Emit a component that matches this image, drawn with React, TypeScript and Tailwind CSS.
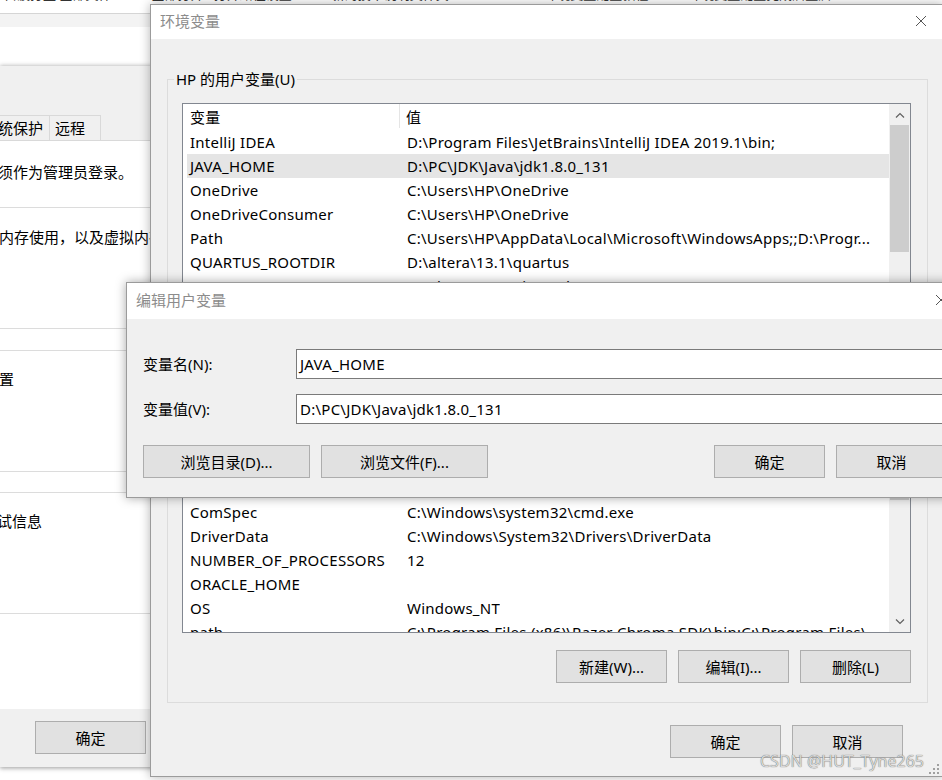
import React from "react";

type Row = [string, string];

const userRows: Row[] = [
  ["IntelliJ IDEA", "D:\\Program Files\\JetBrains\\IntelliJ IDEA 2019.1\\bin;"],
  ["JAVA_HOME", "D:\\PC\\JDK\\Java\\jdk1.8.0_131"],
  ["OneDrive", "C:\\Users\\HP\\OneDrive"],
  ["OneDriveConsumer", "C:\\Users\\HP\\OneDrive"],
  ["Path", "C:\\Users\\HP\\AppData\\Local\\Microsoft\\WindowsApps;;D:\\Progr..."],
  ["QUARTUS_ROOTDIR", "D:\\altera\\13.1\\quartus"],
  ["SOPC_KIT_NIOS2", "D:\\altera\\13.1\\nios2eds"],
];

const systemRows: Row[] = [
  ["ComputerName", "LAPTOP-JP9QG_2K"],
  ["ComSpec", "C:\\Windows\\system32\\cmd.exe"],
  ["DriverData", "C:\\Windows\\System32\\Drivers\\DriverData"],
  ["NUMBER_OF_PROCESSORS", "12"],
  ["ORACLE_HOME", ""],
  ["OS", "Windows_NT"],
  ["path", "C:\\Program Files (x86)\\Razer Chroma SDK\\bin;C:\\Program Files\\..."],
];

function Btn({ children, className = "" }: { children: React.ReactNode; className?: string }) {
  return (
    <div
      className={`flex h-[33px] items-center justify-center border border-[#adadad] bg-[#e1e1e1] text-[15px] leading-[20px] text-black ${className}`}
    >
      {children}
    </div>
  );
}

function Chevron({ up }: { up?: boolean }) {
  return (
    <svg width="10" height="6" viewBox="0 0 10 6">
      <polyline
        points={up ? "1,5.5 5,1.5 9,5.5" : "1,0.5 5,4.5 9,0.5"}
        fill="none"
        stroke="#606060"
        strokeWidth="1.2"
      />
    </svg>
  );
}

function VarList({
  rows,
  selected,
  listH,
  thumbH,
}: {
  rows: Row[];
  selected?: number;
  listH: string;
  thumbH: string;
}) {
  return (
    <div className={`ml-[14px] flex w-[729px] border border-[#828790] bg-white ${listH}`}>
      <div className="min-w-0 flex-1 overflow-hidden pl-[4px] tracking-[0.25px]">
        <div className="flex h-[26px] items-start">
          <div className="flex h-[24px] w-[213px] items-center border-r border-[#e5e5e5] pl-[3px] pt-[2px]">变量</div>
          <div className="flex h-[24px] items-center pl-[6px] pt-[2px]">值</div>
        </div>
        {rows.map((r, i) => (
          <div key={r[0]} className={`flex h-[24px] items-center ${i === selected ? "bg-[#e5e5e5]" : ""}`}>
            <div className="w-[220px] shrink-0 overflow-hidden whitespace-nowrap pl-[3px]">{r[0]}</div>
            <div className="overflow-hidden whitespace-nowrap">{r[1]}</div>
          </div>
        ))}
      </div>
      <div className="flex w-[21px] shrink-0 flex-col bg-[#f0f0f0]">
        <div className="flex h-[21px] items-center justify-center">
          <Chevron up />
        </div>
        <div className={`mx-[1px] bg-[#cdcdcd] ${thumbH}`} />
        <div className="flex-1" />
        <div className="flex h-[21px] items-center justify-center">
          <Chevron />
        </div>
      </div>
    </div>
  );
}

export default function App() {
  return (
    <div className="relative h-[780px] w-[942px] overflow-hidden bg-white font-['Noto_Sans','Noto_Sans_CJK_SC',sans-serif] text-[15px] leading-[20px] text-black">
      {/* background: browser strip + system properties window */}
      <div className="h-[14px] overflow-hidden border-b border-[#d5d5d5] bg-white">
        <div className="-mt-[16px] flex gap-[40px] whitespace-nowrap pl-[4px] text-[13px] text-[#333]">
          <span>自波打盘 全部文件</span>
          <span>全部打开 · 打开路径设置</span>
          <span>新的技术说明文件夹</span>
          <span>Windows环境变量配置教程</span>
          <span>环境变量配置完成后重启</span>
        </div>
      </div>
      <div className="h-[13px] bg-[#f3f3f3]" />
      <div className="h-[39px] bg-white" />
      <div className="w-[420px] bg-[#f0f0f0] shadow-[0_-1px_4px_rgba(0,0,0,0.2),0_2px_4px_rgba(0,0,0,0.25)]">
        <div className="h-[49px]" />
        <div className="flex h-[25px]">
          <div className="flex w-[50px] items-center justify-end overflow-hidden border-r border-t border-[#d9d9d9] pr-[6px]">
            <span className="whitespace-nowrap">系统保护</span>
          </div>
          <div className="flex w-[51px] items-center border-r border-t border-[#d9d9d9] pl-[5px]">远程</div>
        </div>
        <div className="border-t border-[#d9d9d9] bg-white">
          <div className="h-[66px] overflow-hidden whitespace-nowrap pt-[21px]">
            <span className="-ml-[17px]">必须作为管理员登录。</span>
          </div>
          <div className="h-[121px] overflow-hidden whitespace-nowrap border-t border-[#dcdcdc] pt-[19px]">
            <span className="-ml-[1px]">内存使用，以及虚拟内存</span>
          </div>
          <div className="h-[22px] border-t border-[#dcdcdc]" />
          <div className="h-[121px] overflow-hidden whitespace-nowrap border-t border-[#dcdcdc] pt-[18px]">
            <span className="-ml-[16px]">设置</span>
          </div>
          <div className="h-[21px] border-t border-[#dcdcdc]" />
          <div className="h-[121px] overflow-hidden whitespace-nowrap border-t border-[#dcdcdc] pt-[18px]">
            <span className="-ml-[18px]">调试信息</span>
          </div>
          <div className="h-[96px] border-t border-[#dcdcdc]" />
        </div>
        <div className="h-[58px] pl-[35px] pt-[12px]">
          <Btn className="w-[111px]">确定</Btn>
        </div>
      </div>

      {/* 环境变量 dialog */}
      <div className="absolute left-[150px] top-[4px] h-[773px] w-[794px] border border-[#9b9b9b] bg-[#f0f0f0] shadow-[0_0_10px_rgba(0,0,0,0.3)]">
        <div className="flex h-[34px] items-center justify-between bg-white pb-[2px]">
          <span className="pl-[9px] text-[#8c8c8c]">环境变量</span>
          <div className="flex w-[44px] justify-center">
            <svg width="12" height="12" viewBox="0 0 12 12">
              <path d="M1 1L11 11M11 1L1 11" stroke="#555" strokeWidth="1" />
            </svg>
          </div>
        </div>
        <div className="pt-[40px]">
          <div className="ml-[16px] h-[336px] w-[761px] border border-[#dcdcdc]">
            <div className="-mt-[11px] ml-[6px] w-fit bg-[#f0f0f0] px-[2px]">HP 的用户变量(U)</div>
            <div className="mt-[14px]">
              <VarList rows={userRows} selected={1} listH="h-[257px]" thumbH="h-[127px]" />
            </div>
            <div className="ml-[14px] mt-[12px] flex w-[729px] justify-end gap-[12px]">
              <Btn className="w-[111px]">新建(N)...</Btn>
              <Btn className="w-[111px]">编辑(E)...</Btn>
              <Btn className="w-[111px]">删除(D)</Btn>
            </div>
          </div>
          <div className="ml-[16px] mt-[20px] h-[268px] w-[761px] border border-[#dcdcdc]">
            <div className="-mt-[11px] ml-[6px] w-fit bg-[#f0f0f0] px-[2px]">系统变量(S)</div>
            <div className="mt-[4px]">
              <VarList rows={systemRows} listH="h-[184px]" thumbH="h-[29px]" />
            </div>
            <div className="ml-[14px] mt-[17px] flex w-[729px] justify-end gap-[11px]">
              <Btn className="w-[111px]">新建(W)...</Btn>
              <Btn className="w-[111px]">编辑(I)...</Btn>
              <Btn className="w-[111px]">删除(L)</Btn>
            </div>
          </div>
          <div className="mt-[22px] flex justify-end gap-[11px] pr-[40px]">
            <Btn className="w-[111px]">确定</Btn>
            <Btn className="w-[111px]">取消</Btn>
          </div>
        </div>
      </div>

      {/* 编辑用户变量 dialog */}
      <div className="absolute left-[126px] top-[282px] h-[216px] w-[839px] border border-[#9b9b9b] bg-[#f0f0f0] shadow-[0_0_10px_rgba(0,0,0,0.35)]">
        <div className="flex h-[36px] items-center justify-between bg-white pb-[2px]">
          <span className="pl-[9px] text-[#8c8c8c]">编辑用户变量</span>
          <div className="flex w-[46px] justify-center">
            <svg width="12" height="12" viewBox="0 0 12 12">
              <path d="M1 1L11 11M11 1L1 11" stroke="#555" strokeWidth="1" />
            </svg>
          </div>
        </div>
        <div className="pl-[16px] pt-[30px]">
          <div className="flex h-[30px] items-center">
            <div className="w-[153px]">变量名(N):</div>
            <div className="flex h-[30px] w-[653px] items-center border border-[#7a7a7a] bg-white pl-[3px] tracking-[0.25px]">
              JAVA_HOME
            </div>
          </div>
          <div className="mt-[15px] flex h-[30px] items-center">
            <div className="w-[153px]">变量值(V):</div>
            <div className="flex h-[30px] w-[653px] items-center border border-[#7a7a7a] bg-white pl-[3px] tracking-[0.25px]">
              D:\PC\JDK\Java\jdk1.8.0_131
            </div>
          </div>
          <div className="mt-[21px] flex">
            <Btn className="w-[167px]">浏览目录(D)...</Btn>
            <Btn className="ml-[11px] w-[167px]">浏览文件(F)...</Btn>
            <Btn className="ml-[226px] w-[111px]">确定</Btn>
            <Btn className="ml-[11px] w-[111px]">取消</Btn>
          </div>
        </div>
      </div>

      {/* watermark */}
      <div className="absolute left-[760px] top-[751px] text-[16px] text-[#d9d9d9] [text-shadow:0_0_1px_#444]">
        CSDN @HUT_Tyne265
      </div>
      {/* resize grip */}
      <svg className="absolute left-[929px] top-[764px]" width="12" height="12" viewBox="0 0 12 12">
        <rect x="8" y="0" width="2" height="2" fill="#a0a0a0" />
        <rect x="4" y="4" width="2" height="2" fill="#a0a0a0" />
        <rect x="8" y="4" width="2" height="2" fill="#a0a0a0" />
        <rect x="0" y="8" width="2" height="2" fill="#a0a0a0" />
        <rect x="4" y="8" width="2" height="2" fill="#a0a0a0" />
        <rect x="8" y="8" width="2" height="2" fill="#a0a0a0" />
      </svg>
    </div>
  );
}
